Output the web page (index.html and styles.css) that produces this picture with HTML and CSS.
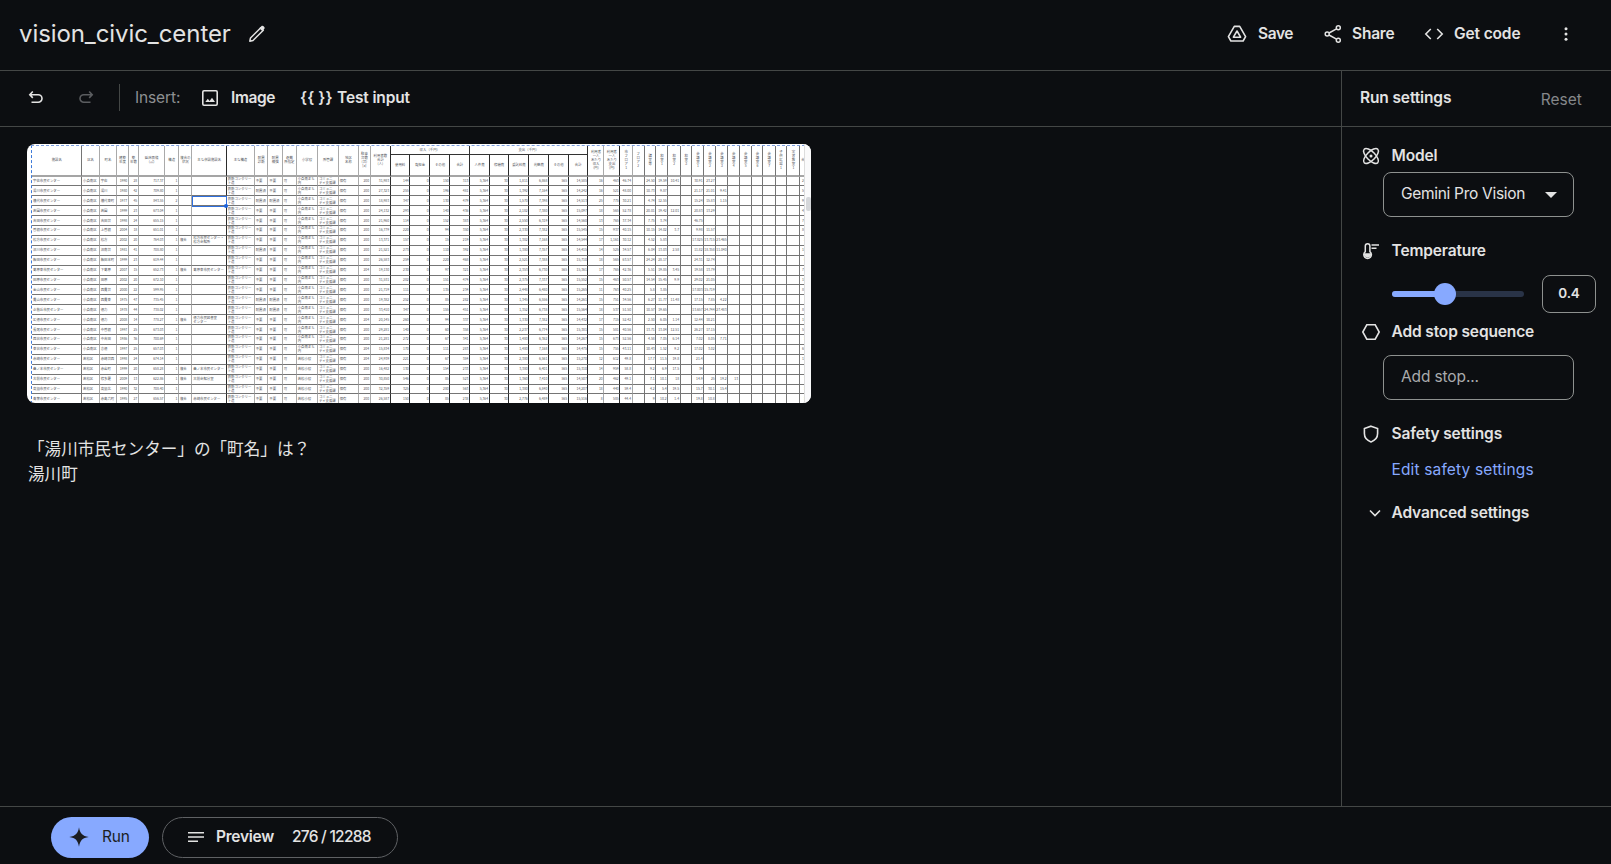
FILE: index.html
```
<!DOCTYPE html>
<html lang="en">
<head>
<meta charset="utf-8">
<title>vision_civic_center</title>
<link rel="stylesheet" href="styles.css">
</head>
<body>
<header class="header">
  <h1 class="title">vision_civic_center</h1>
  <svg class="pencil" width="18" height="18" viewBox="0 0 18 18"><path fill="none" stroke="currentColor" stroke-width="1.500" stroke-linejoin="round" d="M1.800 16.200l.7-3.200L12.800 2.700l2.500 2.500L5 15.500z"/><path fill="currentColor" d="M11.300 3.200l2-2c.8-.8 1.700-.6 2.600.3s1 1.800.3 2.500l-2 2z"/></svg>
  <div class="actions">
    <button class="action save"><svg width="20" height="20" viewBox="0 0 20 20"><g fill="none" stroke="currentColor" stroke-width="1.600" stroke-linejoin="round"><path d="M7.300 2.400h5.400l5.900 10.200-2.500 4.400H3.900l-2.500-4.400z"/><path d="M10 7l3.600 6.200H6.400z"/></g></svg><span class="t-save">Save</span></button>
    <button class="action share"><svg width="20" height="20" viewBox="0 0 20 20"><g fill="none" stroke="currentColor" stroke-width="1.500"><circle cx="4.200" cy="10" r="2"/><circle cx="15.300" cy="3.800" r="2"/><circle cx="15.300" cy="16.200" r="2"/><path d="M6 9l7.500-4.200M6 11l7.500 4.200"/></g></svg><span class="t-share">Share</span></button>
    <button class="action code"><svg width="20" height="20" viewBox="0 0 20 20"><path fill="none" stroke="currentColor" stroke-width="1.600" d="M6.800 5l-5 5 5 5M13.200 5l5 5-5 5"/></svg><span class="t-code">Get code</span></button>
    <svg class="more" width="20" height="20" viewBox="0 0 20 20" fill="currentColor"><circle cx="10" cy="4.700" r="1.500"/><circle cx="10" cy="10" r="1.500"/><circle cx="10" cy="15.300" r="1.500"/></svg>
  </div>
</header>
<div class="body">
  <main class="main">
    <div class="toolbar">
      <svg class="undo" width="18" height="18" viewBox="0 0 18 18"><path fill="none" stroke="currentColor" stroke-width="1.600" d="M5.800 2.500L2.800 5.700l3 3.200M3 5.700h8.200a3.800 3.800 0 010 7.600H4.500"/></svg>
      <svg class="redo" width="18" height="18" viewBox="0 0 18 18"><path fill="none" stroke="currentColor" stroke-width="1.600" d="M12.200 2.500l3 3.200-3 3.200M15 5.700H6.800a3.800 3.800 0 000 7.600h6.700"/></svg>
      <span class="divider"></span>
      <span class="insert">Insert:</span>
      <svg class="pic" width="18" height="18" viewBox="0 0 18 18"><rect x="1.800" y="1.800" width="14.400" height="14.400" rx="1.200" fill="none" stroke="currentColor" stroke-width="1.600"/><path fill="currentColor" d="M4.300 13l2.500-3.200 1.800 2.100 2.400-3.200 3 4.300z"/></svg>
      <span class="t-image">Image</span>
      <span class="braces">{{ }}</span>
      <span class="t-test">Test input</span>
    </div>
    <div class="content">
      <div class="shot">
        <div class="sheet" id="sheet"></div>
        <div class="selection"><span class="handle"></span></div>
        <div class="scroll"><span class="thumb"></span></div>
      </div>
      <div class="prompt">「湯川市民センター」の「町名」は？<br>湯川町</div>
    </div>
  </main>
  <aside class="side">
    <div class="side-head"><span class="t-run">Run settings</span><span class="reset">Reset</span></div>
    <div class="settings">
      <div class="row model"><svg width="20" height="20" viewBox="0 0 20 20"><g fill="none" stroke="currentColor" stroke-width="1.500"><ellipse cx="10" cy="10" rx="9.600" ry="4.300" transform="rotate(45 10 10)"/><ellipse cx="10" cy="10" rx="9.600" ry="4.300" transform="rotate(-45 10 10)"/></g><circle cx="10" cy="10" r="1.500" fill="currentColor"/></svg><span class="t-model">Model</span></div>
      <div class="field select"><span class="t-gemini">Gemini Pro Vision</span><svg width="12" height="6" viewBox="0 0 12 6"><path fill="currentColor" d="M0 0h12L6 6z"/></svg></div>
      <div class="row temp"><svg width="20" height="20" viewBox="0 0 20 20"><path fill="none" stroke="currentColor" stroke-width="1.500" d="M4.300 10.600V5a2.300 2.300 0 014.600 0v5.600a3.800 3.800 0 11-4.600 0z"/><path fill="currentColor" d="M3 12.200h7.200a3.700 3.700 0 11-7.200 0zM10.500 3.300H18v1.500h-7.500zM10.500 6.500h5V8h-5z"/></svg><span class="t-temp">Temperature</span></div>
      <div class="slider-row"><div class="track"><div class="fill"></div><span class="knob"></span></div><div class="value">0.4</div></div>
      <div class="row stop"><svg width="20" height="20" viewBox="0 0 20 20"><path fill="none" stroke="currentColor" stroke-width="1.600" d="M5.800 2.800h8.400l4 7.200-4 7.200H5.800L1.800 10z"/></svg><span class="t-stop">Add stop sequence</span></div>
      <div class="field add"><span class="t-add">Add stop...</span></div>
      <div class="row safety"><svg width="20" height="20" viewBox="0 0 20 20"><path fill="none" stroke="currentColor" stroke-width="1.600" d="M10 2.200l6.600 2.400v5c0 4-2.600 7-6.600 8.300-4-1.300-6.600-4.300-6.600-8.300v-5z"/></svg><span class="t-safety">Safety settings</span></div>
      <div class="edit"><span class="t-edit">Edit safety settings</span></div>
      <div class="row adv"><svg width="20" height="20" viewBox="0 0 20 20"><path fill="none" stroke="currentColor" stroke-width="1.600" d="M5 7.500l5 5 5-5"/></svg><span class="t-adv">Advanced settings</span></div>
    </div>
  </aside>
</div>
<footer class="footer">
  <button class="run"><svg width="20" height="20" viewBox="0 0 20 20"><path fill="currentColor" d="M10 .3C11 6.600 13.400 9 19.700 10 13.400 11 11 13.400 10 19.700 9 13.400 6.600 11 .3 10 6.600 9 9 6.600 10 .3z"/></svg><span class="t-runb">Run</span></button>
  <button class="preview"><svg width="16" height="12" viewBox="0 0 16 12"><path fill="currentColor" d="M0 1h16v1.500H0zM0 5.300h16v1.500H0zM0 9.600h10v1.500H0z"/></svg><span class="t-prev">Preview</span><span class="t-count">276 / 12288</span></button>
</footer>
<script src="script.js"></script>
</body>
</html>
```
FILE: styles.css
```
* { box-sizing: border-box; }
body {
  margin: 0;
  height: 864px;
  display: flex;
  flex-direction: column;
  overflow: hidden;
  background: #0c0e11;
  color: #e3e3e3;
  font: 600 15.500px/20px Inter, "Noto Sans CJK JP", sans-serif;
  letter-spacing: -0.13px;
}
svg { display: block; flex: none; }
span { white-space: nowrap; }
button {
  padding: 0;
  border: 0;
  background: none;
  color: inherit;
  font: inherit;
  letter-spacing: inherit;
  text-align: left;
}
.header {
  height: 71px;
  flex: none;
  display: flex;
  align-items: center;
  padding: 0 35px 2px 19px;
  border-bottom: 1px solid #444746;
}
.title { margin: 0; width: 229px; font-size: 24px; line-height: 30px; font-weight: 400; letter-spacing: -0.08px; }
.actions { margin-left: auto; display: flex; align-items: center; }
.action { display: flex; align-items: center; gap: 10px; }
.action span { padding-bottom: 1px; }
.save { width: 96px; gap: 11px; }
.t-save { letter-spacing: -0.4px; }
.share { width: 101px; gap: 9px; }
.t-share { letter-spacing: -0.2px; }
.code { width: 132px; }
.body { flex: 1; display: flex; min-height: 0; }
.main { width: 1341px; flex: none; }
.toolbar {
  height: 56px;
  display: flex;
  align-items: center;
  padding: 0 0 2px 27px;
  border-bottom: 1px solid #444746;
}
.redo { margin-left: 32px; color: #5b5d60; }
.divider { width: 1px; height: 27px; margin: 0 15px 0 24px; background: #444746; }
.insert { width: 66px; font-weight: 400; color: #8e9092; }
.t-image { width: 69px; margin-left: 12px; letter-spacing: -0.4px; }
.braces { width: 37px; letter-spacing: 0.1px; }
.content { padding: 17px 0 0 27px; }
.shot {
  position: relative;
  width: 784px;
  height: 259px;
  overflow: hidden;
  border-radius: 8px;
  background: #fff;
}
.sheet {
  display: grid;
  margin: 1px 0 0 4px;
  width: 774px;
  border-left: 1px dashed #3f7bd9;
  border-top: 1px dashed #7d9fe0;
  font: 400 3.4px/4px "Noto Sans CJK JP", sans-serif;
  letter-spacing: 0;
  color: #55575d;
  grid-template-rows: 30.500px;
  grid-auto-rows: 9.910px;
}
.cell {
  display: flex;
  align-items: center;
  overflow: hidden;
  padding: 0 0.5px 0 1px;
  border-right: 1px solid #aaa;
  border-bottom: 1px solid #757575;
  white-space: pre;
}
.cell.mid { border-right-color: #757575; }
.cell.dark { border-right-color: #2c2c2c; }
.cell.num { justify-content: flex-end; }
.cell.end { padding: 0; border-right: 0; }
.cell.head { justify-content: center; text-align: center; border-bottom: 2px solid #a5a5a5; }
.cell.sub { padding-top: 9px; }
.group {
  height: 9px;
  display: flex;
  align-items: center;
  justify-content: center;
  align-self: start;
  grid-row: 1;
  border-bottom: 1px solid #333;
  border-right: 1px solid #333;
  background: #fff;
}
.selection {
  position: absolute;
  left: 165px;
  top: 52px;
  width: 35px;
  height: 11px;
  border: 1px solid #2f6fdc;
}
.handle { position: absolute; right: -2px; bottom: -2px; width: 4px; height: 4px; border-radius: 2px; background: #1a62dd; }
.scroll { position: absolute; right: 0; top: 0; width: 7px; height: 259px; background: #fafafb; border-left: 1px solid #ddd; }
.thumb { position: absolute; left: 1px; top: 53px; width: 5px; height: 14px; border-radius: 2px; background: #d5d7da; }
.prompt {
  margin: 33px 0 0 1px;
  letter-spacing: 0;
  font: 400 16.600px/25px "Noto Sans CJK JP", sans-serif;
}
.side { flex: 1; border-left: 1px solid #444746; }
.side-head {
  height: 56px;
  display: flex;
  align-items: center;
  padding: 0 29px 1px 18px;
  border-bottom: 1px solid #444746;
}
.reset { margin: 3px 0 0 auto; font-weight: 400; letter-spacing: 0.05px; color: #85878a; }
.settings { padding-left: 19px; }
.row { display: flex; align-items: center; gap: 10.500px; height: 20px; }
.row span { padding-bottom: 1px; }
.model { margin-top: 19px; }
.field {
  width: 191px;
  height: 45px;
  margin-left: 22px;
  padding: 0 16px 0 17px;
  display: flex;
  align-items: center;
  justify-content: space-between;
  border: 1px solid #8e918f;
  border-radius: 8px;
}
.select { margin-top: 6px; font-weight: 400; }
.t-gemini { padding-bottom: 2px; letter-spacing: -0.3px; }
.temp { margin-top: 24px; }
.slider-row { display: flex; align-items: center; margin: 13px 0 0 31px; height: 39px; }
.track { position: relative; width: 132px; height: 6px; border-radius: 3px; background: #293347; }
.fill { width: 53px; height: 6px; border-radius: 3px; background: #87a9ff; }
.knob { position: absolute; left: 42px; top: -8px; width: 22px; height: 22px; border-radius: 50%; background: #87a9ff; }
.value {
  width: 54px;
  height: 38px;
  margin-left: 18px;
  display: flex;
  align-items: center;
  justify-content: center;
  padding-bottom: 2px;
  border: 1px solid #8e918f;
  border-radius: 8px;
  font-size: 13.500px;
}
.stop { margin-top: 9px; }
.add { margin-top: 13px; padding-bottom: 2px; font-weight: 400; color: #a9abad; }
.safety { margin-top: 24px; }
.edit { margin: 16px 0 0 30.500px; height: 20px; color: #87a9ff; font-weight: 400; letter-spacing: 0.15px; }
.adv { margin: 23px 0 0 4px; gap: 6.500px; }
.footer {
  height: 58px;
  flex: none;
  display: flex;
  gap: 13px;
  padding: 10px 0 0 51px;
  border-top: 1px solid #444746;
}
.run {
  width: 98px;
  height: 41px;
  display: flex;
  align-items: center;
  gap: 13px;
  padding: 0 0 1px 18px;
  border-radius: 21px;
  background: #87a9ff;
  color: #1c1e22;
  font-weight: 400;
}
.t-runb { padding-bottom: 1px; letter-spacing: -0.2px; }
.preview {
  width: 236px;
  height: 41px;
  display: flex;
  align-items: center;
  padding: 0 0 2px 25px;
  border: 1px solid #5f6164;
  border-radius: 21px;
}
.t-prev { width: 76px; margin-left: 12px; letter-spacing: -0.25px; }
.t-count { font-weight: 500; letter-spacing: -0.75px; }
```
FILE: script.js
```
// Column right edges, measured from the sheet's left side.
const edges = [50, 67.700, 84.700, 96.700, 106.700, 133, 147, 160.300, 194.700, 222.700, 236.300, 250.700, 264.700, 286, 306.700, 326.700, 338.700, 358.700, 378.300, 398.300, 418.300, 438, 457.700, 477.300, 497.300, 517, 536.700, 556.500, 572.300, 588.300, 600.700, 612.700, 624.300, 636.300, 648.700, 660.300, 672.300, 684.300, 696.300, 707.700, 720.300, 731.300, 743.700, 755.300, 768.500, 774];
const heads = ["施設名", "区名", "町名", "建築\n年度", "築\n年数", "延床面積\n(㎡)", "構造", "複合の\n状況", "主な併設施設名", "主な構造", "耐震\n診断", "耐震\n補強", "避難\n所指定", "小学校", "所管課", "地区\n名称", "駐車\n台数\n(台)\n[a]", "利用者数\n合計\n(人)", "使用料", "負担金", "その他", "合計", "人件費", "修繕費", "委託料費", "光熱費", "その他", "合計", "利用者\n一人\nあたり\n収入\n(円)", "利用者\n一人\nあたり\n支出\n(円)", "市\nフ\nロ\nア\n1", "フ\nロ\nア\n2", "講\n堂\n等", "和\n室\n1", "和\n室\n2", "和\n室\n3", "会\n議\n室\n1", "会\n議\n室\n2", "会\n議\n室\n3", "会\n議\n室\n4", "会\n議\n室\n5", "会\n議\n室\n6", "会\n議\n室\n7", "子\n供\n広\n場\n1", "実\n習\n教\n室\n1", "合"];
const rows = [
  ["宇佐市民センター", "宇佐", "1990", "28", "717.37", "31,983", "144", "150", "313", "1,811", "6,868", "14,585", "16", "463", "46.74", "24.50", "19.59", "10.41", "30.91", "23.27"],
  ["湯川市民センター", "湯川", "1980", "42", "709.80", "27,323", "255", "196", "481", "1,392", "7,164", "14,242", "16", "521", "48.00", "10.73", "9.87", "", "21.17", "21.01", "9.41"],
  ["横代市民センター", "横代東町", "1977", "45", "843.55", "18,983", "347", "130", "479", "1,570", "7,398", "14,513", "25", "775", "30.21", "4.74", "12.55", "", "15.24", "15.83", "1.15"],
  ["若園市民センター", "若園", "1999", "23", "673.04", "24,132", "293", "140", "436", "2,182", "7,380", "15,097", "18", "565", "52.78", "20.01", "19.42", "12.01", "20.83", "13.29"],
  ["吉田市民センター", "吉田台", "1998", "24", "655.15", "21,960", "114", "152", "383", "2,550", "6,319", "14,560", "13", "765", "37.34", "7.75", "3.74", "", "46.75"],
  ["曽根市民センター", "上曽根", "2004", "18", "651.01", "16,779", "220", "94", "350", "2,330", "7,382", "15,545", "15", "937", "40.15", "10.15", "14.02", "3.7", "9.98", "11.57"],
  ["松方市民センター", "松方", "2002", "20", "764.03", "13,371", "157", "15", "219", "1,382", "7,168", "14,544", "17", "1,161", "30.12", "4.52", "5.83", "", "17.825", "13.715", "23.465"],
  ["沼川市民センター", "沼南台", "1981", "41", "708.80", "21,521", "273", "110", "392", "1,380", "7,357", "14,415", "14", "525", "34.57", "6.04", "13.03", "2.58", "11.82", "18.358", "11.040"],
  ["飯田市民センター", "飯田本町", "1999", "23", "619.44", "26,583", "259", "220", "468", "2,521", "7,388", "15,710", "18", "565", "63.57", "24.24", "28.17", "", "24.31", "12.74"],
  ["葛原東市民センター", "下葛原", "2007", "15", "652.73", "19,130", "230", "97", "321", "2,353", "6,730", "15,361", "17", "765", "42.36", "5.51", "19.85", "3.45", "19.58", "13.79"],
  ["田原市民センター", "田原", "2002", "20", "672.10", "31,531", "282", "151", "474", "2,375", "7,337", "15,552", "15", "463", "50.57", "14.54", "15.45", "9.9", "29.02", "21.05"],
  ["金山市民センター", "西貫台", "2000", "22", "599.95", "21,719", "111", "135", "234", "2,448", "6,480", "15,265", "11", "763", "40.25", "5.8", "3.85", "", "17.003", "15.719"],
  ["貫山市民センター", "西貫東", "1975", "47", "735.45", "19,382", "252", "85", "282", "1,345", "6,556", "14,261", "15", "751", "34.56", "6.27", "11.77", "11.48", "17.15", "7.85", "4.22"],
  ["企救丘市民センター", "徳力", "1978", "44", "738.02", "33,410", "347", "155", "451", "1,352", "6,738", "15,564", "18", "537", "51.50", "10.57", "19.65", "", "13.657", "24.744", "27.483"],
  ["広徳市民センター", "徳力", "2008", "14", "778.27", "20,145", "260", "94", "337", "1,330", "7,382", "14,432", "17", "715", "52.42", "2.50", "6.05", "1.14", "12.44", "10.21"],
  ["長尾市民センター", "中曽根", "1997", "25", "673.03", "29,281", "140", "60", "358", "2,237", "6,774", "15,381", "15", "581", "40.56", "13.71", "13.04", "12.51", "26.27", "17.15"],
  ["西谷市民センター", "中吉田", "1986", "36", "700.69", "21,281", "272", "67", "341", "1,480", "6,362", "14,267", "15", "673", "52.56", "4.58", "7.05", "6.14", "7.02", "8.05", "7.71"],
  ["東谷市民センター", "志徳", "1997", "25", "657.03", "15,834", "170", "111", "283", "1,480", "7,168", "14,475", "15", "755", "43.11", "10.43", "1.52", "9.2", "17.02", "3.02"],
  ["赤崎市民センター", "赤崎台西", "1998", "24", "674.14", "24,939", "221", "67", "384", "2,380", "6,561", "15,270", "12", "612", "49.8", "17.7", "11.5", "19.8", "21.4"],
  ["畠ノ本市民センター", "赤岩町", "1999", "20", "658.28", "16,482", "130", "154", "233", "3,380", "6,401", "15,310", "14", "959", "58.8", "9.2", "6.9", "17.5", "34"],
  ["古前市民センター", "修多羅", "2009", "13", "622.86", "30,850", "546", "85", "523", "1,360", "7,410", "14,507", "20", "462", "49.1", "7.1", "10.1", "18", "14.9", "25", "19.2", "13"],
  ["高須市民センター", "高須北", "1990", "32", "708.40", "32,359", "325", "280", "563", "1,380", "6,840", "14,207", "18", "440", "59.4", "4.2", "5.4", "19.5", "15.7", "30.1", "15.4"],
  ["青葉市民センター", "赤島六町", "1995", "27", "656.57", "26,587", "150", "85", "238", "2,776", "6,489", "15,516", "8", "585", "44.4", "9", "10.2", "1.4", "19.8", "10.8"]
];
const annex = { 6: "松方市民センター・\n松方会館所", 9: "葛原東市民センター", 14: "徳力市民図書室\nセンター", 19: "畠ノ本市民センター", 20: "古前会館分室", 22: "赤崎市民センター" };
const last = ["20", "54", "93", "41", "74", "84", "2", "10", "0", "71", "10", "85", "1", "83", "10", "52", "5", "65", "12", "1", "7", "5", "5"];
const sheet = document.getElementById("sheet");
sheet.style.gridTemplateColumns = edges.map((e, i) => (e - (i ? edges[i - 1] : 0)) + "px").join(" ");

function cell(text, cls, col, row) {
  const el = document.createElement("div");
  el.className = "cell " + cls;
  if (col === 8 || (col >= 17 && col <= 27) || col === 29) el.className += " dark";
  else if (col === 45) el.className += " end";
  else if (col === 0 || col >= 31) el.className += " mid";
  el.style.gridColumn = col + 1;
  el.style.gridRow = row;
  el.textContent = text;
  sheet.append(el);
}

heads.forEach((h, i) => cell(h, "head" + (i >= 18 && i <= 27 ? " sub" : ""), i, 1));
[["収入（千円）", "19 / 23"], ["支出（千円）", "23 / 29"]].forEach(([text, span]) => {
  const el = document.createElement("div");
  el.className = "group";
  el.style.gridColumn = span;
  el.textContent = text;
  sheet.append(el);
});

rows.forEach((r, n) => {
  const wakamatsu = n >= 18;
  const damaged = [1, 2, 7, 12, 13].includes(n);
  const cells = [r[0], wakamatsu ? "若松区" : "小倉南区", r[1], r[2], r[3], r[4], n === 2 ? "2" : "1", annex[n] ? "複合" : "", annex[n] || "", "鉄筋コンクリー\nト造",
    damaged ? "耐震済" : "不要", [2, 12, 13].includes(n) ? "耐震済" : "不要", "可", wakamatsu ? "若松小校" : "小倉南まち\n内", "コミュニ\nティ支援課", "保有", [9, 14, 17, 18].includes(n) ? "204" : "200",
    r[5], r[6], "0", r[7], r[8], "5,364", "30", r[9], r[10], "565", r[11], r[12], r[13], r[14], "", r[15], r[16], r[17], "", ...r.slice(18)];
  while (cells.length < 45) cells.push("");
  cells.push(last[n]);
  cells.forEach((c, i) => cell(c, [3, 4, 5, 6].includes(i) || i >= 16 ? "num" : "", i, n + 2));
});
```
